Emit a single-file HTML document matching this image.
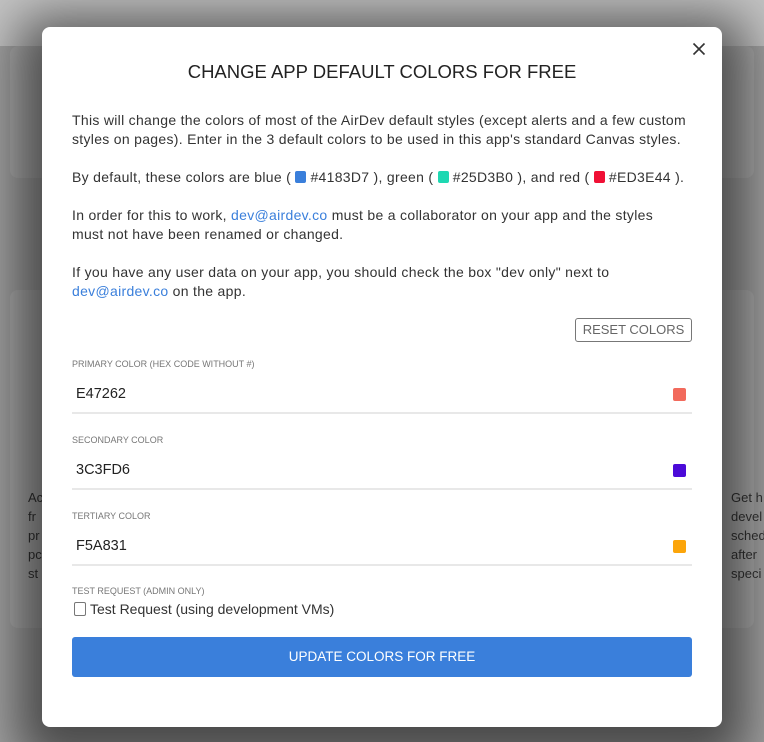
<!DOCTYPE html>
<html><head><style>
body{margin:0;width:764px;height:742px;overflow:hidden;background:#a3a3a3;font-family:"Liberation Sans",sans-serif;position:relative}
.top{position:absolute;left:0;top:0;width:764px;height:46px;background:#c4c4c4}
.card{position:absolute;background:#acacac;border-radius:8px}
.bgt{position:absolute;font-size:13px;line-height:19px;color:#333}
.modal{position:absolute;left:42px;top:27px;width:680px;height:700px;background:#fff;border-radius:8px;box-shadow:0 14px 50px 25px rgba(0,0,0,.55)}
.x{position:absolute;left:650px;top:15px}
h1{position:absolute;left:0;width:680px;top:34px;margin:0;text-align:center;font-weight:normal;font-size:18.5px;color:#222;letter-spacing:0}
p{position:absolute;left:30px;margin:0;font-size:14px;line-height:19px;color:#333;letter-spacing:.3px;white-space:nowrap}
a{color:#3a7fdb;text-decoration:none}
.sw{display:inline-block;width:11px;height:12px;border-radius:2px;vertical-align:-1px}
.reset{position:absolute;left:533px;top:291px;width:115px;height:22px;border:1px solid #777;border-radius:3px;font-size:13px;line-height:22px;text-align:center;color:#666}
.lab{position:absolute;left:30px;font-size:9px;color:#777}
.inp{position:absolute;left:30px;width:620px;height:38px;border-bottom:2px solid #e8e8e8}
.inp span{position:absolute;left:4px;top:12px;font-size:14.5px;color:#222}
.inp i{position:absolute;right:6px;top:14px;width:13px;height:13px;border-radius:2px}
.btn{position:absolute;left:30px;top:610px;width:620px;height:40px;background:#3a7fdb;border-radius:3px;color:#fff;font-size:13.5px;line-height:40px;text-align:center}
.cb{position:absolute;left:32px;top:575px;width:10px;height:12px;border:1px solid #777;border-radius:2px}
</style></head><body>
<div class="top"></div>
<div class="card" style="left:10px;top:46px;width:744px;height:132px"></div>
<div class="card" style="left:10px;top:290px;width:744px;height:338px"></div>
<div class="bgt" style="left:28px;top:488px">Ac<br>fr<br>pr<br>pc<br>st</div>
<div class="bgt" style="left:731px;top:488px">Get h<br>devel<br>sched<br>after<br>speci</div>
<div class="modal">
<svg class="x" width="14" height="14" viewBox="0 0 14 14"><path d="M1.5 1.5L12.5 12.5M12.5 1.5L1.5 12.5" stroke="#333" stroke-width="1.6"/></svg>
<h1>CHANGE APP DEFAULT COLORS FOR FREE</h1>
<p style="top:84px">This will change the colors of most of the AirDev default styles (except alerts and a few custom<br>styles on pages). Enter in the 3 default colors to be used in this app's standard Canvas styles.</p>
<p style="top:141px">By default, these colors are blue ( <span class="sw" style="background:#3a7fdb"></span> #4183D7 ), green ( <span class="sw" style="background:#1ed8b2"></span> #25D3B0 ), and red ( <span class="sw" style="background:#f01035"></span> #ED3E44 ).</p>
<p style="top:179px">In order for this to work, <a>dev@airdev.co</a> must be a collaborator on your app and the styles<br>must not have been renamed or changed.</p>
<p style="top:236px">If you have any user data on your app, you should check the box "dev only" next to<br><a>dev@airdev.co</a> on the app.</p>
<div class="reset">RESET COLORS</div>
<div class="lab" style="top:332px">PRIMARY COLOR (HEX CODE WITHOUT #)</div>
<div class="inp" style="top:347px"><span>E47262</span><i style="background:#f26a5c"></i></div>
<div class="lab" style="top:408px">SECONDARY COLOR</div>
<div class="inp" style="top:423px"><span>3C3FD6</span><i style="background:#4b0ad8"></i></div>
<div class="lab" style="top:484px">TERTIARY COLOR</div>
<div class="inp" style="top:499px"><span>F5A831</span><i style="background:#fca50a"></i></div>
<div class="lab" style="top:559px">TEST REQUEST (ADMIN ONLY)</div>
<div class="cb"></div>
<p style="top:573px;left:48px;letter-spacing:0">Test Request (using development VMs)</p>
<div class="btn">UPDATE COLORS FOR FREE</div>
</div>
</body></html>
